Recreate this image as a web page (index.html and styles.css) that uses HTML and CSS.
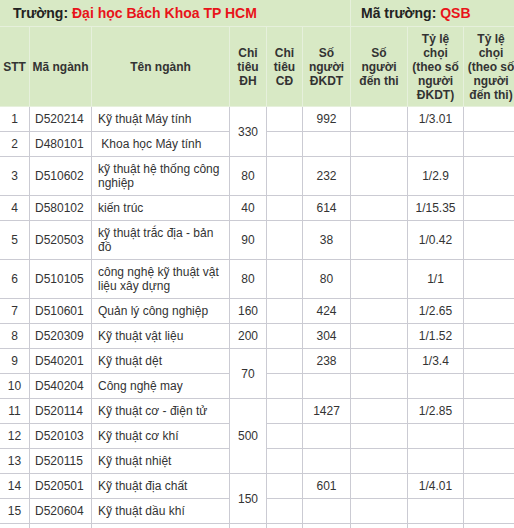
FILE: index.html
```html
<!DOCTYPE html>
<html lang="vi">
<head>
<meta charset="utf-8">
<title>Đại học Bách Khoa TP HCM</title>
<link rel="stylesheet" href="styles.css">
</head>
<body>
<table class="tbl">
  <colgroup>
    <col class="c1"><col class="c2"><col class="c3"><col class="c4"><col class="c5"><col class="c6"><col class="c7"><col class="c8"><col class="c9">
  </colgroup>
  <thead>
    <tr class="title-row">
      <th colspan="6" class="title-left">Trường: <span class="red">Đại học Bách Khoa TP HCM</span></th>
      <th colspan="3" class="title-right">Mã trường: <span class="red">QSB</span></th>
    </tr>
    <tr class="head-row">
      <th>STT</th>
      <th>Mã ngành</th>
      <th>Tên ngành</th>
      <th>Chỉ<br>tiêu<br>ĐH</th>
      <th>Chỉ<br>tiêu<br>CĐ</th>
      <th>Số<br>người<br>ĐKDT</th>
      <th>Số<br>người<br>đến thi</th>
      <th>Tỷ lệ<br>chọi<br>(theo số<br>người<br>ĐKDT)</th>
      <th>Tỷ lệ<br>chọi<br>(theo số<br>người<br>đến thi)</th>
    </tr>
  </thead>
  <tbody>
    <tr><td class="num">1</td><td class="code">D520214</td><td class="name">Kỹ thuật Máy tính</td><td class="num" rowspan="2">330</td><td></td><td class="num">992</td><td></td><td class="num">1/3.01</td><td></td></tr>
    <tr><td class="num">2</td><td class="code">D480101</td><td class="name">&nbsp;Khoa học Máy tính</td><td></td><td></td><td></td><td></td><td></td></tr>
    <tr><td class="num">3</td><td class="code">D510602</td><td class="name">kỹ thuật hệ thống công nghiệp</td><td class="num">80</td><td></td><td class="num">232</td><td></td><td class="num">1/2.9</td><td></td></tr>
    <tr><td class="num">4</td><td class="code">D580102</td><td class="name">kiến trúc</td><td class="num">40</td><td></td><td class="num">614</td><td></td><td class="num">1/15.35</td><td></td></tr>
    <tr><td class="num">5</td><td class="code">D520503</td><td class="name">kỹ thuật trắc địa - bản đồ</td><td class="num">90</td><td></td><td class="num">38</td><td></td><td class="num">1/0.42</td><td></td></tr>
    <tr><td class="num">6</td><td class="code">D510105</td><td class="name">công nghệ kỹ thuật vật liệu xây dựng</td><td class="num">80</td><td></td><td class="num">80</td><td></td><td class="num">1/1</td><td></td></tr>
    <tr><td class="num">7</td><td class="code">D510601</td><td class="name">Quản lý công nghiệp</td><td class="num">160</td><td></td><td class="num">424</td><td></td><td class="num">1/2.65</td><td></td></tr>
    <tr><td class="num">8</td><td class="code">D520309</td><td class="name">Kỹ thuật vật liệu</td><td class="num">200</td><td></td><td class="num">304</td><td></td><td class="num">1/1.52</td><td></td></tr>
    <tr><td class="num">9</td><td class="code">D540201</td><td class="name">Kỹ thuật dệt</td><td class="num" rowspan="2">70</td><td></td><td class="num">238</td><td></td><td class="num">1/3.4</td><td></td></tr>
    <tr><td class="num">10</td><td class="code">D540204</td><td class="name">Công nghệ may</td><td></td><td></td><td></td><td></td><td></td></tr>
    <tr><td class="num">11</td><td class="code">D520114</td><td class="name">Kỹ thuật cơ - điện tử</td><td class="num" rowspan="3">500</td><td></td><td class="num">1427</td><td></td><td class="num">1/2.85</td><td></td></tr>
    <tr><td class="num">12</td><td class="code">D520103</td><td class="name">Kỹ thuật cơ khí</td><td></td><td></td><td></td><td></td><td></td></tr>
    <tr><td class="num">13</td><td class="code">D520115</td><td class="name">Kỹ thuật nhiệt</td><td></td><td></td><td></td><td></td><td></td></tr>
    <tr><td class="num">14</td><td class="code">D520501</td><td class="name">Kỹ thuật địa chất</td><td class="num" rowspan="2">150</td><td></td><td class="num">601</td><td></td><td class="num">1/4.01</td><td></td></tr>
    <tr><td class="num">15</td><td class="code">D520604</td><td class="name">Kỹ thuật dầu khí</td><td></td><td></td><td></td><td></td><td></td></tr>
    <tr><td></td><td></td><td></td><td></td><td></td><td></td><td></td><td></td><td></td></tr>
  </tbody>
</table>
</body>
</html>
```

FILE: styles.css
```css
html, body {
  margin: 0;
  padding: 0;
  overflow: hidden;
  background: #ffffff;
}

.tbl {
  border-collapse: collapse;
  table-layout: fixed;
  width: 519px;
  margin: -1px 0 0 -1px;
  font-family: "Liberation Sans", Arial, sans-serif;
  font-size: 12px;
  line-height: 14px;
  color: #333333;
}

.c1 { width: 30px; }
.c2 { width: 62px; }
.c3 { width: 138px; }
.c4 { width: 37px; }
.c5 { width: 36px; }
.c6 { width: 48px; }
.c7 { width: 57px; }
.c8 { width: 56px; }
.c9 { width: 55px; }

.tbl td {
  border: 1px solid #cbcbd3;
  padding: 5px 4px;
  vertical-align: middle;
  height: 14px;
}

.tbl th {
  background: #d8e9c5;
  border: 1px solid #e6f0dc;
  font-weight: bold;
  color: #333333;
  text-align: center;
  vertical-align: middle;
  padding: 5px 2px 4px;
}

.title-row th {
  font-size: 14px;
  line-height: 16px;
  color: #222222;
  text-align: left;
  padding: 5px 4px;
  white-space: nowrap;
}

.title-left {
  padding-left: 13px !important;
}

.title-right {
  padding-left: 10px !important;
}

.red {
  color: #e8141a;
}

.num {
  text-align: center;
}

.code {
  text-align: left;
  padding-left: 5px !important;
}

.name {
  text-align: left;
  padding-left: 6px !important;
}
```
